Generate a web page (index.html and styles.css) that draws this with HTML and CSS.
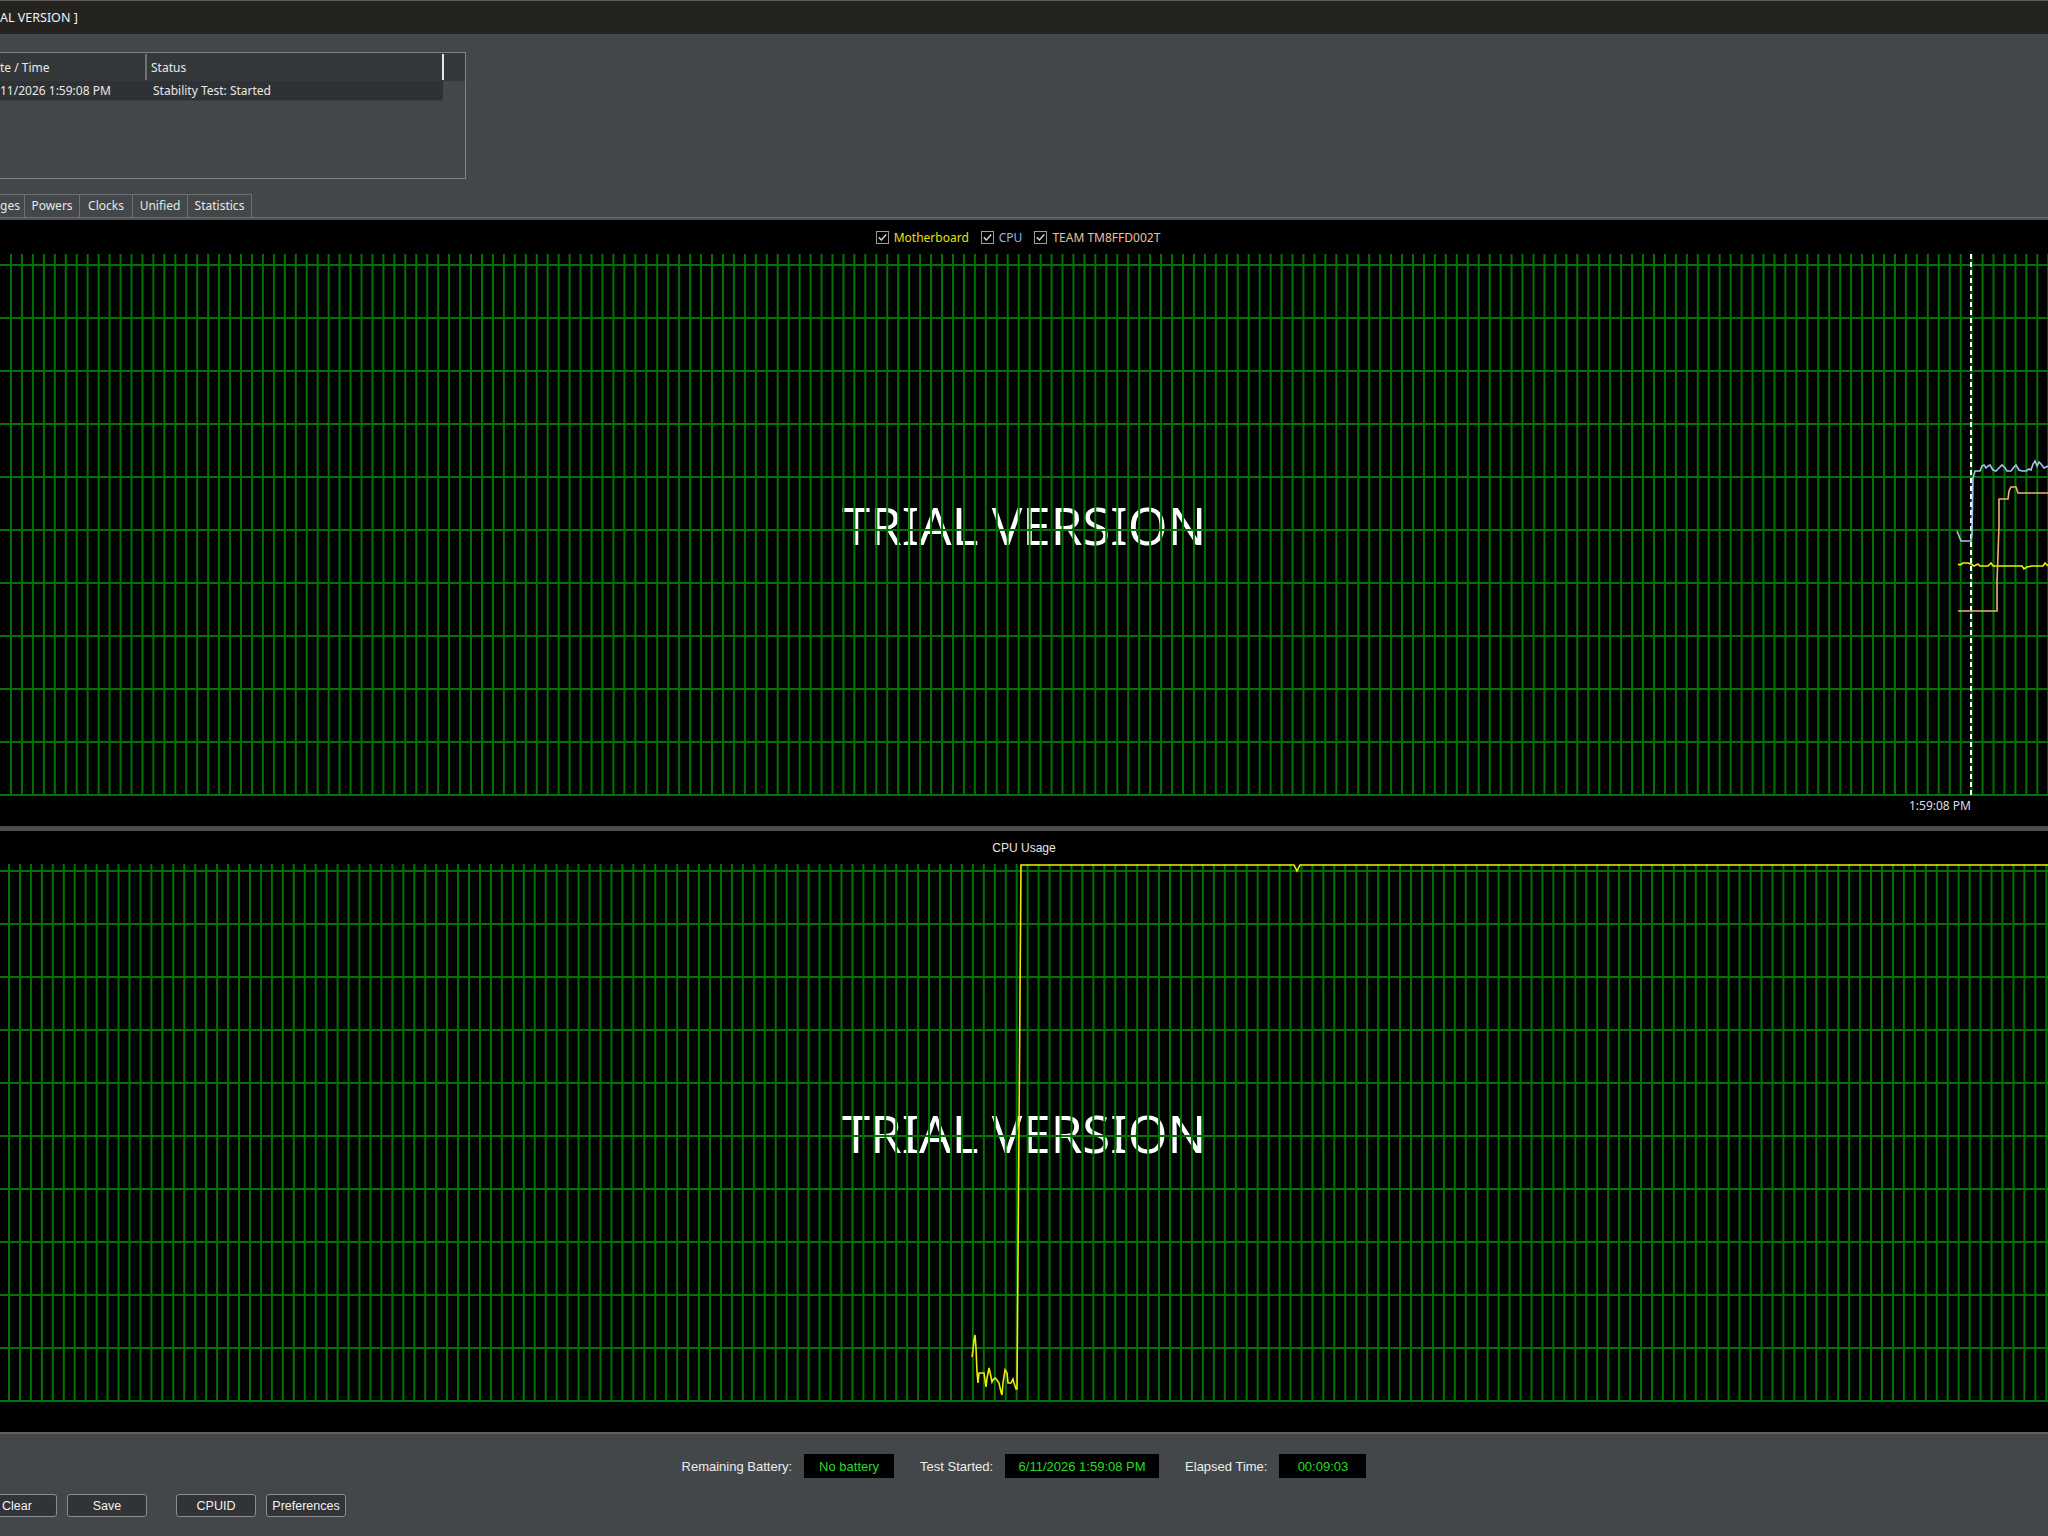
FILE: index.html
```html
<!DOCTYPE html>
<html>
  <head>
    <meta charset="utf-8" />
    <link rel="stylesheet" href="styles.css">
  </head>
  <body>
    <div class="titlebar"><span>AL VERSION ]</span></div>

    <div class="top">
      <div class="log">
        <div class="log-head">
          <div class="col c1">te / Time</div>
          <div class="col c2">Status</div>
        </div>
        <div class="log-row">
          <div class="col c1">11/2026 1:59:08 PM</div>
          <div class="col c2">Stability Test: Started</div>
        </div>
      </div>

      <div class="tabs">
        <div class="tab t-volt">ges</div>
        <div class="tab t-pow">Powers</div>
        <div class="tab t-clk">Clocks</div>
        <div class="tab t-uni">Unified</div>
        <div class="tab t-stat">Statistics</div>
      </div>
    </div>
    <div class="tabline"></div>

    <!-- Temperatures chart -->
    <div class="chart chart-temp">
      <div class="legend">
        <label class="item">
          <svg class="cb" viewBox="0 0 13 13"><rect x="0.5" y="0.5" width="12" height="12" fill="#000" stroke="#9d9d9d"/><path d="M2.8 6.4 L5.4 9 L10.2 3.6" fill="none" stroke="#cfcfcf" stroke-width="1.5"/></svg>
          <span class="mb">Motherboard</span>
        </label>
        <label class="item">
          <svg class="cb" viewBox="0 0 13 13"><rect x="0.5" y="0.5" width="12" height="12" fill="#000" stroke="#9d9d9d"/><path d="M2.8 6.4 L5.4 9 L10.2 3.6" fill="none" stroke="#cfcfcf" stroke-width="1.5"/></svg>
          <span class="cpu">CPU</span>
        </label>
        <label class="item">
          <svg class="cb" viewBox="0 0 13 13"><rect x="0.5" y="0.5" width="12" height="12" fill="#000" stroke="#9d9d9d"/><path d="M2.8 6.4 L5.4 9 L10.2 3.6" fill="none" stroke="#cfcfcf" stroke-width="1.5"/></svg>
          <span class="ssd">TEAM TM8FFD002T</span>
        </label>
      </div>

      <div class="plot plot-temp">
        <div class="watermark">TRIAL VERSION</div>
        <svg class="series" viewBox="0 0 2048 542" width="2048" height="542">
          <line x1="1971" y1="0" x2="1971" y2="542" stroke="#ffffff" stroke-width="2" stroke-dasharray="5 3"/>
          <polyline fill="none" stroke="#a4c6e6" stroke-width="1.6"
            points="1957,277 1961,287 1971,287 1972,280 1973,224 1975,217 1980,217 1982,212 1984,211 1986,214 1988,212 1990,211 1993,216 1996,217 1999,214 2002,211 2005,214 2007,217 2011,217 2014,213 2016,211 2019,216 2022,217 2026,217 2029,215 2031,216 2033,210 2035,207 2037,212 2039,208 2041,210 2044,214 2048,212"/>
          <polyline fill="none" stroke="#eeee00" stroke-width="1.6"
            points="1958,310 1960,311 1963,309 1968,309 1971,310 1974,312 1978,310 1980,312 1988,312 1991,309 1993,312 2000,312 2022,312 2024,315 2027,313 2032,312 2043,312 2045,309 2048,312"/>
          <polyline fill="none" stroke="#f0b272" stroke-width="1.6"
            points="1958,357 1997,357 1997,328 1999,272 1999,245 2008,245 2009,237 2011,233 2016,233 2018,239 2048,239"/>
        </svg>
      </div>

      <div class="axis">
        <span class="tick">1:59:08 PM</span>
      </div>
    </div>

    <div class="splitter"></div>

    <!-- CPU usage chart -->
    <div class="chart chart-cpu">
      <div class="chart-title">CPU Usage</div>
      <div class="plot plot-cpu">
        <div class="watermark">TRIAL VERSION</div>
        <svg class="series" viewBox="0 0 2048 538" width="2048" height="538">
          <polyline fill="none" stroke="#eeee00" stroke-width="1.6"
            points="972,493 973,486 974,476 975,471 976,484 977,508 978,519 979,509 984,509 986,523 987,514 989,504 990,508 992,518 993,516 995,514 997,516 999,519 1001,528 1002,531 1003,519 1005,506 1007,509 1008,519 1011,519 1013,515 1014,519 1016,525 1017,525 1021,1 1294,1 1297,7 1300,1 2048,1"/>
        </svg>
      </div>
      <div class="axis"></div>
    </div>

    <div class="bottom">
      <div class="stats">
        <div class="stat">
          <span class="label">Remaining Battery:</span>
          <span class="value v-bat">No battery</span>
        </div>
        <div class="stat">
          <span class="label">Test Started:</span>
          <span class="value v-start">6/11/2026 1:59:08 PM</span>
        </div>
        <div class="stat">
          <span class="label">Elapsed Time:</span>
          <span class="value v-time">00:09:03</span>
        </div>
      </div>

      <div class="buttons">
        <button class="btn btn-clear">Clear</button>
        <button class="btn btn-save">Save</button>
        <button class="btn btn-cpuid">CPUID</button>
        <button class="btn btn-prefs">Preferences</button>
      </div>
    </div>
  </body>
</html>
```

FILE: styles.css
```css
* {
  margin: 0;
  padding: 0;
  box-sizing: border-box;
}

html,
body {
  width: 2048px;
  height: 1536px;
  overflow: hidden;
}

body {
  background: #43474a;
  font-family: "Noto Sans", "Liberation Sans", sans-serif;
  font-size: 12px;
  color: #e8e8e8;
}

/* Window title */
.titlebar {
  height: 34px;
  background: #242320;
  border-top: 1px solid #5c5b58;
  display: flex;
  align-items: center;
  color: #f2f2f2;
  font-size: 12.5px;
}

/* Log table + tabs */
.top {
  height: 183px;
  padding-top: 18px;
  display: flex;
  flex-direction: column;
}

.log {
  width: 466px;
  height: 127px;
  border: 1px solid #80848a;
  border-left: none;
}

.log-head {
  display: flex;
  height: 28px;
  background: #35383b;
  align-items: center;
}

.log-head .c1 {
  width: 147px;
  height: 26px;
  display: flex;
  align-items: center;
  border-right: 2px solid #6f7275;
}

.log-head .c2 {
  width: 297px;
  height: 26px;
  display: flex;
  align-items: center;
  padding-left: 4px;
  border-right: 2px solid #e6e6e6;
}

.log-row {
  display: flex;
  width: 443px;
  height: 20px;
  align-items: center;
  background: #2f3235;
  border-bottom: 1px solid #3b3e41;
}

.log-row .c1 {
  width: 147px;
}

.log-row .c2 {
  padding-left: 6px;
}

.tabs {
  display: flex;
  margin-top: 15px;
  height: 23px;
}

.tab {
  display: flex;
  align-items: center;
  justify-content: center;
  padding-bottom: 2px;
  border: 1px solid #6c7073;
  border-left: none;
  border-bottom: none;
  color: #e8e8e8;
}

.t-volt {
  width: 25px;
  justify-content: flex-start;
}

.t-pow {
  width: 55px;
}

.t-clk {
  width: 53px;
}

.t-uni {
  width: 55px;
}

.t-stat {
  width: 64px;
}

.tabline {
  height: 3px;
  background: #4d5154;
  border-top: 1px solid #6e7275;
}

/* Charts */
.chart {
  background: #000;
}

.chart-temp {
  height: 606px;
}

.chart-cpu {
  height: 601px;
}

.legend {
  height: 34px;
  display: flex;
  justify-content: center;
  align-items: center;
  gap: 12px;
  padding-right: 12px;
}

.legend .item {
  display: flex;
  align-items: center;
  gap: 5px;
}

.cb {
  width: 13px;
  height: 13px;
}

.mb {
  color: #e4e400;
}

.cpu {
  color: #8fb8e8;
}

.ssd {
  color: #e8c29c;
}

.chart-title {
  height: 33px;
  display: flex;
  align-items: center;
  justify-content: center;
  font-family: "Liberation Sans", sans-serif;
  color: #e6e6e6;
}

.plot {
  position: relative;
  overflow: hidden;
  background: #000;
  display: flex;
  align-items: center;
  justify-content: center;
}

.plot-temp {
  height: 542px;
}

.plot-cpu {
  height: 538px;
}

/* grid lines drawn over the watermark */
.plot::before,
.plot::after {
  content: "";
  position: absolute;
  top: 0;
  bottom: 0;
  right: 0;
}

.plot::before {
  left: 0;
  background-image: linear-gradient(180deg, #007400 2px, transparent 2px);
  background-size: 100% 53px;
}

.plot::after {
  background-image: linear-gradient(90deg, #007400 2px, transparent 2px);
  background-size: 10.96px 100%;
}

.plot-temp::before {
  background-position: 0 10px;
}

.plot-temp::after {
  left: 10px;
}

.plot-cpu::before {
  background-position: 0 6px;
}

.plot-cpu::after {
  left: 7.5px;
}

.watermark {
  font-size: 51px;
  font-weight: 400;
  color: #ffffff;
  line-height: 1;
}

.series {
  position: absolute;
  top: 0;
  left: 0;
  z-index: 1;
}

.axis {
  height: 30px;
  position: relative;
}

.tick {
  position: absolute;
  right: 77px;
  top: 2px;
  line-height: 16px;
  color: #d8dee6;
}

.splitter {
  height: 5px;
  background: #4b4e51;
}

/* Bottom panel */
.bottom {
  height: 104px;
  border-top: 2px solid #5d6164;
  padding-top: 20px;
  font-family: "Liberation Sans", sans-serif;
  font-size: 13px;
}

.stats {
  display: flex;
  justify-content: center;
  align-items: center;
  gap: 26px;
  height: 24px;
}

.stat {
  display: flex;
  align-items: center;
  gap: 12px;
}

.label {
  color: #ececec;
}

.value {
  height: 24px;
  display: flex;
  align-items: center;
  justify-content: center;
  background: #000;
  color: #26dc26;
}

.v-bat {
  width: 90px;
}

.v-start {
  width: 154px;
}

.v-time {
  width: 87px;
}

.buttons {
  display: flex;
  margin-top: 16px;
  height: 23px;
}

.btn {
  width: 80px;
  height: 23px;
  border: 1px solid #8a8d90;
  border-radius: 3px;
  background: #313336;
  color: #f2f2f2;
  font-family: "Liberation Sans", sans-serif;
  font-size: 12.5px;
}

.btn-clear {
  margin-left: -23px;
}

.btn-save {
  margin-left: 10px;
}

.btn-cpuid {
  margin-left: 29px;
}

.btn-prefs {
  margin-left: 10px;
}
```
